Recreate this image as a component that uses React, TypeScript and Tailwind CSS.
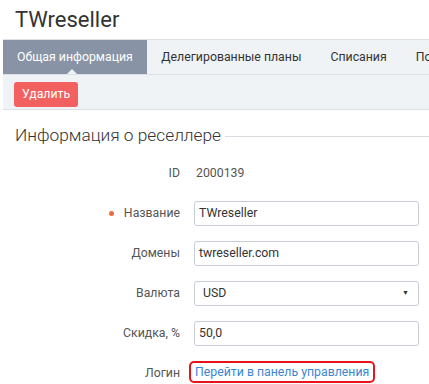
export default function App() {
  const tabs = ['Общая информация', 'Делегированные планы', 'Списания', 'Пользователи'];
  return (
    <div className="h-[384px] w-[429px] overflow-hidden bg-white font-['Roboto',sans-serif] text-[#333]">
      <h1 className="pl-[15px] pt-[2px] text-[22px] leading-[36px] text-[#333]">TWreseller</h1>

      <div className="ml-[3px] mt-[1px] overflow-hidden border-y border-[#dde1e7] bg-[#f0f3f6]">
        <div className="flex h-[34px] whitespace-nowrap">
          {tabs.map((t, i) => (
            <div
              key={t}
              className={
                i === 0
                  ? 'relative flex items-center bg-[#8893a5] px-[14px] text-[12.3px] text-white'
                  : 'flex items-center px-[14.5px] text-[12.3px] text-[#333]'
              }
            >
              {t}
              {i === 0 && (
                <span className="absolute bottom-0 left-[64px] h-0 w-0 border-x-[5px] border-b-[5px] border-x-transparent border-b-[#f0f3f6]" />
              )}
            </div>
          ))}
        </div>
      </div>

      <div className="ml-[3px] h-[35px] border-b border-[#dde1e7] bg-[#f0f3f6] pl-[11px] pt-[6px]">
        <button className="h-[25px] rounded-[3px] bg-[#f36060] px-[8px] text-[12.3px] text-white">
          Удалить
        </button>
      </div>

      <div className="flex items-center gap-[4px] pl-[15px] pt-[12px]">
        <span className="text-[17.3px] font-light leading-[26px] text-[#333]">Информация о реселлере</span>
        <span className="mt-[2px] h-px flex-1 bg-[#d9dde3]" />
      </div>

      <div className="mt-[13px] flex flex-col gap-[15px] pr-[10px] text-[12.3px]">
        <Row label="ID">
          <span className="pl-[2px] text-[#555]">2000139</span>
        </Row>
        <Row label="Название" required>
          <Input value="TWreseller" />
        </Row>
        <Row label="Домены">
          <Input value="twreseller.com" />
        </Row>
        <Row label="Валюта">
          <div className="flex h-[25px] w-full items-center justify-between rounded-[3px] border border-[#c8cdd5] bg-white pl-[8px] pr-[9px] text-[#333]">
            <span>USD</span>
            <span className="text-[7px] text-[#333]">▼</span>
          </div>
        </Row>
        <Row label="Скидка, %">
          <Input value="50,0" />
        </Row>
        <Row label="Логин">
          <span className="-ml-[5px] -mt-[3px] inline-block rounded-[5px] border-2 border-[#e8141b] px-[4px] leading-[18px] text-[#3b86d3]">
            Перейти в панель управления
          </span>
        </Row>
      </div>
    </div>
  );
}

function Row({ label, required, children }: { label: string; required?: boolean; children: React.ReactNode }) {
  return (
    <div className="flex h-[25px] items-center">
      <div className="flex w-[180px] items-center justify-end text-[#555]">
        {required && <span className="mr-[10px] h-[5px] w-[5px] rounded-full bg-[#f06a3a]" />}
        {label}
      </div>
      <div className="ml-[14px] flex flex-1 items-center">{children}</div>
    </div>
  );
}

function Input({ value }: { value: string }) {
  return (
    <div className="flex h-[25px] w-full items-center rounded-[3px] border border-[#c8cdd5] bg-white px-[4px] text-[#333]">
      {value}
    </div>
  );
}
